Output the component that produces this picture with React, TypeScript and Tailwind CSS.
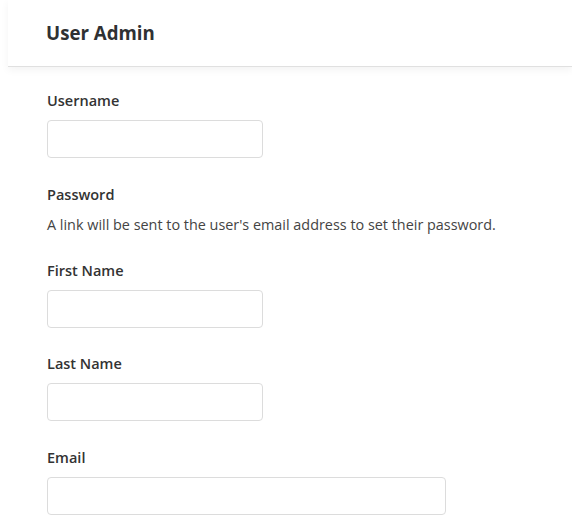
import React from 'react';

function Field({ label, width, className = '' }: { label: string; width: string; className?: string }) {
    return (
        <div className={`flex flex-col ${className}`}>
            <label className="text-[14.5px] leading-[20px] font-semibold text-[#333] mb-[9px]">{label}</label>
            <input
                type="text"
                className={`${width} h-[38px] rounded-[4px] border border-[#dcdcdc] bg-white outline-none`}
            />
        </div>
    );
}

export default function App() {
    return (
        <div className="min-h-screen bg-white pl-2 overflow-hidden" style={{ fontFamily: '"Open Sans", Lato, sans-serif' }}>
            <header className="h-[67px] flex items-center pl-[38px] border-b border-[#e0e0e0] shadow-[0_3px_8px_rgba(0,0,0,0.05)]">
                <h1 className="text-[18.7px] font-bold text-[#2f3133]">User Admin</h1>
            </header>
            <div className="pl-[39px] pt-[24px] flex flex-col">
                <Field label="Username" width="w-[216px]" />
                <div className="flex flex-col mt-[27px]">
                    <div className="text-[14.5px] leading-[20px] font-semibold text-[#333] mb-[10px]">Password</div>
                    <p className="text-[14.4px] leading-[20px] text-[#444]">
                        A link will be sent to the user's email address to set their password.
                    </p>
                </div>
                <Field label="First Name" width="w-[216px]" className="mt-[26px]" />
                <Field label="Last Name" width="w-[216px]" className="mt-[26px]" />
                <Field label="Email" width="w-[399px]" className="mt-[27px]" />
            </div>
        </div>
    );
}
